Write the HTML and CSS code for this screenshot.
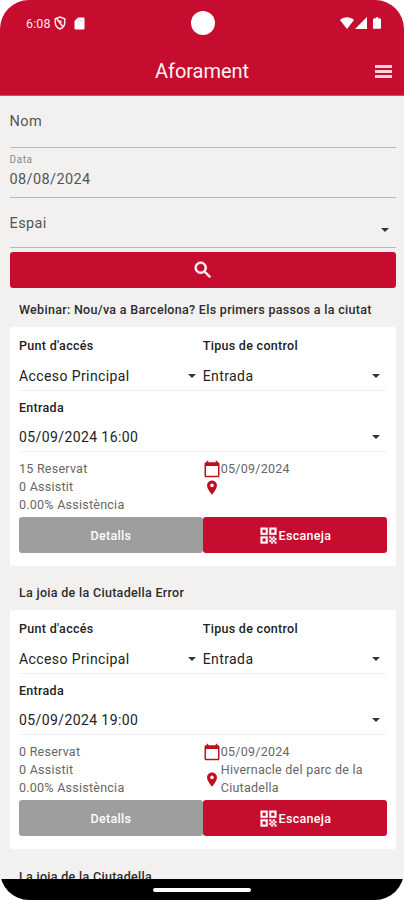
FILE: index.html
```html
<!DOCTYPE html>
<html lang="ca">
<head>
<meta charset="utf-8">
<title>Aforament</title>
<link rel="stylesheet" href="styles.css">
</head>
<body>
<svg class="defs" width="0" height="0">
  <symbol id="calendar" viewBox="0 0 24 24"><path d="M20 3h-1V1h-2v2H7V1H5v2H4c-1.1 0-2 .9-2 2v16c0 1.1.9 2 2 2h16c1.1 0 2-.9 2-2V5c0-1.100-.9-2-2-2zm0 18H4V8h16v13z"/></symbol>
  <symbol id="pin" viewBox="0 0 24 24"><path d="M12 2C8.130 2 5 5.130 5 9c0 5.250 7 13 7 13s7-7.750 7-13c0-3.870-3.130-7-7-7zm0 9.500a2.500 2.500 0 1 1 0-5 2.500 2.500 0 0 1 0 5z"/></symbol>
  <symbol id="qr" viewBox="0 0 24 24"><path fill-rule="evenodd" d="M3 11h8V3H3v8zm2-6h4v4H5V5zM3 21h8v-8H3v8zm2-6h4v4H5v-4zM13 3v8h8V3h-8zm6 6h-4V5h4v4zM19 19h2v2h-2zM13 13h2v2h-2zM15 15h2v2h-2zM13 17h2v2h-2zM15 19h2v2h-2zM17 17h2v2h-2zM17 13h2v2h-2zM19 15h2v2h-2z"/></symbol>
</svg>
<div class="phone">
  <header class="top">
    <div class="status">
      <span class="clock">6:08</span>
      <svg class="shield" viewBox="0 0 12 14" width="12" height="14"><path d="M6 1l4.700 1.800v4C10.700 9.800 8.700 12 6 13 3.300 12 1.300 9.800 1.300 6.800v-4zM3 3l6 8" fill="none" stroke="#fbe9ec" stroke-width="1.500"/><path d="M4.500 4.500h3v3z" fill="#fbe9ec"/></svg>
      <svg class="sd" viewBox="0 0 11 13" width="11" height="13"><path d="M4 .5h5.500a1 1 0 0 1 1 1v10a1 1 0 0 1-1 1h-8a1 1 0 0 1-1-1V4z" fill="#fff"/><path d="M4.500 2.500v2M6.500 2.500v2M8.500 2.500v2" stroke="#efb9c1" stroke-width=".7"/></svg>
      <span class="camera"></span>
      <svg class="wifi" viewBox="0 0 14 12" width="14" height="12"><path d="M0 3C4-.7 10-.7 14 3L7 12z" fill="#fff"/></svg>
      <svg class="signal" viewBox="0 0 12 12" width="12" height="12"><path d="M12 0v12H0z" fill="#fff"/></svg>
      <svg class="battery" viewBox="0 0 9 13" width="8" height="12"><path d="M3 0h3v1.500h2a1 1 0 0 1 1 1V12a1 1 0 0 1-1 1H1a1 1 0 0 1-1-1V2.500a1 1 0 0 1 1-1h2z" fill="#fff"/></svg>
    </div>
    <div class="appbar">
      <h1>Aforament</h1>
      <span class="menu"><i></i><i></i><i></i></span>
    </div>
  </header>
  <main>
    <div class="field nom"><span>Nom</span></div>
    <div class="field data"><label>Data</label><span>08/08/2024</span></div>
    <div class="field espai"><span>Espai</span><i class="caret"></i></div>
    <button class="search"><svg viewBox="0 0 24 24" width="22" height="22"><path fill="#fff" stroke="#fff" stroke-width=".6" d="M15.500 14h-.79l-.28-.27A6.470 6.470 0 0 0 16 9.500 6.500 6.500 0 1 0 9.500 16c1.610 0 3.090-.59 4.230-1.570l.27.28v.79l5 4.990L20.490 19l-4.990-5zm-6 0a4.500 4.500 0 1 1 0-9 4.500 4.500 0 0 1 0 9z"/></svg></button>

    <h2 class="long">Webinar: Nou/va a Barcelona? Els primers passos a la ciutat</h2>
    <section class="card">
      <div class="row two"><div><b>Punt d'accés</b><p><span>Acceso Principal</span><i class="caret"></i></p></div><div><b class="tipus">Tipus de control</b><p><span>Entrada</span><i class="caret"></i></p></div></div>
      <div class="row"><div><b>Entrada</b><p><span>05/09/2024 16:00</span><i class="caret"></i></p></div></div>
      <div class="info">
        <ul><li>15 Reservat</li><li>0 Assistit</li><li>0.00% Assistència</li></ul>
        <ul><li><svg class="cal"><use href="#calendar"/></svg><span>05/09/2024</span></li><li><svg class="pin"><use href="#pin"/></svg></li></ul>
      </div>
      <div class="actions"><button class="grey">Detalls</button><button><svg class="qr"><use href="#qr"/></svg>Escaneja</button></div>
    </section>

    <h2 class="second">La joia de la Ciutadella Error</h2>
    <section class="card">
      <div class="row two"><div><b>Punt d'accés</b><p><span>Acceso Principal</span><i class="caret"></i></p></div><div><b class="tipus">Tipus de control</b><p><span>Entrada</span><i class="caret"></i></p></div></div>
      <div class="row"><div><b>Entrada</b><p><span>05/09/2024 19:00</span><i class="caret"></i></p></div></div>
      <div class="info">
        <ul><li>0 Reservat</li><li>0 Assistit</li><li>0.00% Assistència</li></ul>
        <ul><li><svg class="cal"><use href="#calendar"/></svg><span>05/09/2024</span></li><li><svg class="pin"><use href="#pin"/></svg><span>Hivernacle del parc de la Ciutadella</span></li></ul>
      </div>
      <div class="actions"><button class="grey">Detalls</button><button><svg class="qr"><use href="#qr"/></svg>Escaneja</button></div>
    </section>
    <h2 class="second last">La joia de la Ciutadella</h2>
  </main>
  <footer><span></span></footer>
</div>
</body>
</html>
```
FILE: styles.css
```css
* { box-sizing: border-box; margin: 0; padding: 0; }
body { background: #fff; font-family: Roboto, "Liberation Sans", sans-serif; overflow: hidden; }
.defs { position: absolute; }
.phone { width: 404px; height: 900px; border-radius: 29px; overflow: hidden; background: #f3f1f0; display: flex; flex-direction: column; }
svg { flex: none; }

.top { height: 96px; flex: none; background: #c60c2f; color: #fff; border-bottom: 1px solid #d94a5c; }
.status { height: 46px; padding: 0 23px 0 26px; display: flex; align-items: center; position: relative; }
.clock { font-size: 12.500px; width: 28px; letter-spacing: .1px; color: #fbe9ec; }
.sd { margin-left: 8px; }
.camera { position: absolute; left: 190.500px; top: 11px; width: 24px; height: 24px; border-radius: 50%; background: #fff; }
.wifi { margin-left: auto; }
.signal { margin-left: 1px; }
.battery { margin-left: 6px; }
.appbar { height: 49px; display: flex; align-items: center; justify-content: center; position: relative; }
.appbar h1 { font-size: 20px; font-weight: 400; letter-spacing: -.05px; color: #fff1f2; }
.menu { position: absolute; right: 12px; top: 19px; width: 17px; display: grid; gap: 2px; }
.menu i { height: 3px; background: #f6d5da; }

main { flex: 1; min-height: 0; overflow: hidden; padding: 0 8px 0 9.500px; }
.field { border-bottom: 1.500px solid #b9b7b6; color: #555; font-size: 14.500px; line-height: 18px; letter-spacing: .4px; position: relative; }
.nom { height: 52px; padding-top: 17px; }
.data { height: 50px; padding-top: 5px; }
.data label { display: block; font-size: 10px; line-height: 14px; letter-spacing: .6px; color: #8a8988; }
.data span { display: block; padding-top: 4px; line-height: 18px; }
.espai { height: 50px; padding-top: 17px; }
.espai .caret { position: absolute; right: 7px; top: 30px; }
.caret { display: block; border: 4px solid transparent; border-top: 4.500px solid #333; border-bottom: 0; }
.search { margin-top: 4px; width: 100%; }
button { height: 36px; border: 0; border-radius: 3px; background: #c60c2f; color: #fff; font: 500 12.500px Roboto, "Liberation Sans", sans-serif; letter-spacing: .3px; display: flex; align-items: center; justify-content: center; }

h2 { height: 39px; padding: 0 9.500px; font-size: 12.500px; line-height: 43px; font-weight: 500; color: #2c2c2c; letter-spacing: .3px; white-space: nowrap; }
h2.second { height: 44.800px; line-height: 54px; }
h2.last { line-height: 56px; }
.card { height: 238.500px; background: #fff; border-radius: 2px; padding: 0 9.500px; }
.row { height: 61.500px; display: flex; border-bottom: 1px solid #f0f0f0; }
.row.two { height: 63.500px; padding-top: 2px; }
.row > div { flex: 1; padding-top: 9px; }
.row b { display: block; font-size: 12.500px; font-weight: 500; line-height: 16px; letter-spacing: .3px; color: #222; }
.row p { display: flex; align-items: center; justify-content: space-between; padding: 11.500px 7px 0 0; font-size: 14px; line-height: 20px; letter-spacing: .4px; color: #222; }
.info { height: 65px; padding-top: 8px; display: flex; color: #666; font-size: 12.500px; line-height: 18px; letter-spacing: .25px; }
.info ul { flex: 1; list-style: none; }
.info li { display: flex; align-items: center; min-height: 18px; }
.cal { width: 18px; height: 18px; fill: #c00d20; }
.pin { width: 18px; height: 17px; fill: #c00d20; }
.actions { display: flex; }
.actions button { flex: 1; }
.actions .grey { background: #9e9e9e; }
.qr { width: 21px; height: 21px; fill: #fff; stroke: #fff; stroke-width: .4px; margin-right: -.5px; }
footer { height: 21px; flex: none; background: #000; display: flex; justify-content: center; padding-top: 8.500px; }
footer span { width: 98px; height: 4px; border-radius: 2px; background: #fff; }
```
